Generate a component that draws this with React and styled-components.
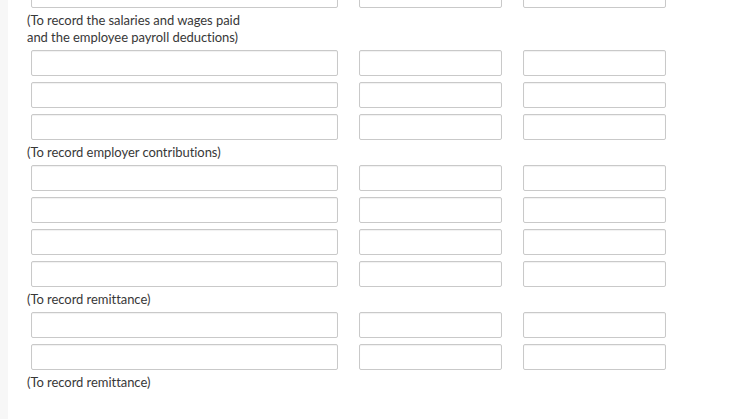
import React from 'react';
import styled, { createGlobalStyle } from 'styled-components';

const GlobalStyle = createGlobalStyle`
  body {
    margin: 0;
    background: #ffffff;
    font-family: Lato, "Open Sans", Arial, sans-serif;
    overflow: hidden;
  }
`;

const Page = styled.div`
  display: flex;
  min-height: 100vh;
`;

const Strip = styled.div`
  width: 8px;
  flex-shrink: 0;
  background-color: #f7f7f7;
`;

const Sheet = styled.div`
  flex: 1;
  padding-left: 19px;
  margin-top: -21px;
`;

const Row = styled.div`
  display: grid;
  grid-template-columns: 307px 143px 143px;
  column-gap: 21px;
  padding: 3px 0 3px 4px;
`;

const Field = styled.input`
  box-sizing: border-box;
  width: 100%;
  height: 26px;
  margin: 0;
  padding: 0 6px;
  border: 1px solid #c9c9c9;
  border-radius: 2px;
  background: #ffffff;
  box-shadow: inset 0 1px 1px rgba(0, 0, 0, 0.06);
  font-family: inherit;
  font-size: 13px;
  outline: none;
`;

const Note = styled.div`
  padding: 1px 0;
  font-size: 13px;
  line-height: 17px;
  color: #383838;
  font-variant-ligatures: none;
  letter-spacing: -0.05px;
`;

const EntryRow = () => (
  <Row>
    <Field type="text" />
    <Field type="text" />
    <Field type="text" />
  </Row>
);

const sections = [
  { rows: 3, note: ['(To record the salaries and wages paid', 'and the employee payroll deductions)'] },
  { rows: 4, note: ['(To record employer contributions)'] },
  { rows: 2, note: ['(To record remittance)'] },
  { rows: 0, note: ['(To record remittance)'] },
];

const App = () => (
  <>
    <GlobalStyle />
    <Page>
      <Strip />
      <Sheet>
        <EntryRow />
        {sections.map((s, i) => (
          <React.Fragment key={i}>
            <Note>
              {s.note.map((line, j) => (
                <React.Fragment key={j}>
                  {j > 0 && <br />}
                  {line}
                </React.Fragment>
              ))}
            </Note>
            {Array.from({ length: s.rows }).map((_, k) => (
              <EntryRow key={k} />
            ))}
          </React.Fragment>
        ))}
      </Sheet>
    </Page>
  </>
);

export default App;
